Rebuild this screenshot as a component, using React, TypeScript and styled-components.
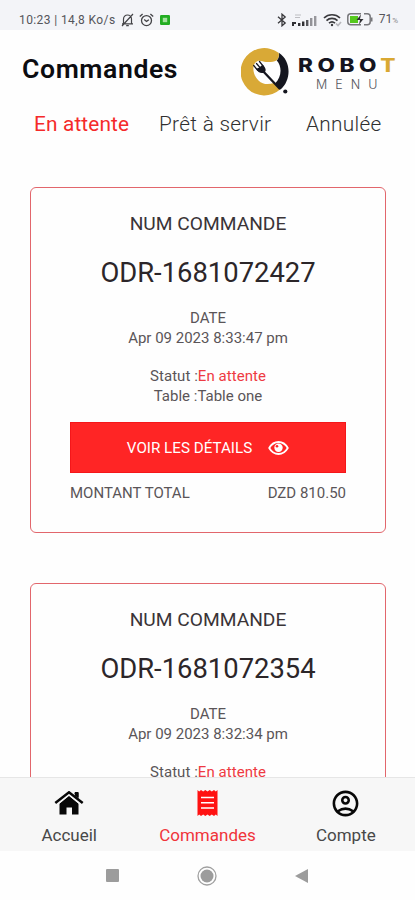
import React from "react";
import styled, { createGlobalStyle } from "styled-components";
import { MdOutlineAccountCircle } from "react-icons/md";

const GlobalStyle = createGlobalStyle`
  * { box-sizing: border-box; }
  body { margin: 0; background: #fefefe; font-family: Roboto, "Liberation Sans", sans-serif; color: #222; }
  svg { display: block; flex: none; }
`;

const Screen = styled.div`
  width: 415px;
  height: 900px;
  display: flex;
  flex-direction: column;
  overflow: hidden;
  background: #fefefe;
`;

const StatusBar = styled.header`
  height: 30px;
  flex: none;
  display: flex;
  align-items: center;
  justify-content: space-between;
  padding: 9px 17px 0 19px;
  background: #f3f4f8;
  color: #55555a;
  font-size: 12px;
  line-height: 20px;
`;

const StatusGroup = styled.div<{ $gap: number }>`
  display: flex;
  align-items: center;
  gap: ${(p) => p.$gap}px;
`;

const StatusText = styled.span<{ $spacing?: number }>`
  letter-spacing: ${(p) => p.$spacing ?? 0}px;
  white-space: nowrap;
  small { font-size: 8px; color: #88888c; }
`;

const TitleBar = styled.div`
  height: 76px;
  flex: none;
  display: flex;
  justify-content: space-between;
  padding: 17px 18px 0 22px;
`;

const Title = styled.h1`
  margin: 5px 0 0;
  font-size: 26.6px;
  line-height: 34px;
  font-weight: 600;
  letter-spacing: 0.6px;
  color: #0c0c10;
`;

const Logo = styled.div`
  display: flex;
  width: 156px;
  gap: 7px;
`;

const LogoWords = styled.div`
  display: flex;
  flex-direction: column;
  padding-top: 8px;
  font-family: Inter, "Open Sans", sans-serif;
`;

const LogoName = styled.span`
  font-size: 18.5px;
  line-height: 20px;
  font-weight: 800;
  letter-spacing: 3.7px;
  transform: scaleX(1.22);
  transform-origin: left;
  color: #14141f;
  b { color: #d9a832; font-weight: 800; }
`;

const LogoSub = styled.span`
  padding-left: 18px;
  font-size: 12.5px;
  line-height: 20px;
  font-weight: 300;
  letter-spacing: 8px;
  color: #55555b;
`;

const Tabs = styled.nav`
  flex: none;
  height: 81px;
  display: grid;
  grid-template-columns: 125px 147px auto;
  padding: 5px 0 0 34px;
`;

const Tab = styled.span<{ $active?: boolean }>`
  font-size: 20.8px;
  line-height: 26px;
  font-weight: ${(p) => (p.$active ? 400 : 300)};
  letter-spacing: ${(p) => (p.$active ? 0.15 : 0.3)}px;
  color: ${(p) => (p.$active ? "#f52a2a" : "#303030")};
  white-space: nowrap;
`;

const Orders = styled.main`
  flex: 1;
  min-height: 0;
  overflow: hidden;
  display: flex;
  flex-direction: column;
  gap: 50px;
  padding: 0 29px 0 30px;
`;

const Card = styled.article`
  flex: none;
  height: 346px;
  display: flex;
  flex-direction: column;
  align-items: center;
  padding: 21.4px 39px 0;
  border: 1px solid #e2666c;
  border-radius: 6px;
`;

const CardHeading = styled.div`
  font-size: 19.2px;
  line-height: 30px;
  color: #3a3437;
`;

const OrderNumber = styled.div`
  margin: 14px 0 15px;
  font-size: 27.4px;
  line-height: 40px;
  color: #2c2629;
`;

const Line = styled.div<{ $spacing?: number }>`
  font-size: 15px;
  line-height: 20px;
  letter-spacing: ${(p) => p.$spacing ?? 0}px;
  color: #5a5558;
  white-space: nowrap;
`;

const Details = styled.div`
  margin-top: 18px;
  display: flex;
  flex-direction: column;
  align-items: center;
`;

const Pending = styled.span`
  color: #ee3a42;
`;

const DetailsButton = styled.button`
  align-self: stretch;
  flex: none;
  height: 51px;
  margin: 15.6px 0 10px;
  padding: 2px 0 0;
  border: 1px solid #f5161a;
  background: #ff2525;
  color: #fff;
  display: flex;
  align-items: center;
  justify-content: center;
  gap: 16px;
  font: 400 15.2px/20px Roboto, sans-serif;
`;

const TotalRow = styled.div`
  align-self: stretch;
  display: flex;
  justify-content: space-between;
`;

const BottomNav = styled.nav`
  flex: none;
  height: 74px;
  display: grid;
  grid-template-columns: repeat(3, 1fr);
  background: #f7f7f7;
  border-top: 1px solid #e6e6e6;
`;

const NavItem = styled.div<{ $active?: boolean }>`
  display: flex;
  flex-direction: column;
  align-items: center;
  padding-top: 9px;
  color: ${(p) => (p.$active ? "#ff1a1a" : "#080808")};
`;

const NavIcon = styled.div`
  height: 32px;
  display: flex;
  align-items: center;
`;

const NavLabel = styled.span<{ $active?: boolean }>`
  margin-top: 5px;
  font-size: 17px;
  line-height: 22px;
  color: ${(p) => (p.$active ? "#f0343a" : "#484848")};
`;

const SystemBar = styled.footer`
  flex: none;
  height: 49px;
  display: flex;
  align-items: center;
  justify-content: space-between;
  padding: 0 107px 0 106px;
`;

const MutedBell = () => (
  <svg width="13" height="14" viewBox="0 0 13 14" fill="none" stroke="#444448" strokeWidth="1.2">
    <path d="M2.5 10.5V6a4 4 0 0 1 8 0v4.5M1 10.8h11M5.2 12.7h2.6M12 1 1 13" />
  </svg>
);

const AlarmClock = () => (
  <svg width="15" height="14" viewBox="0 0 15 14" fill="none" stroke="#444448" strokeWidth="1.3">
    <circle cx="7.5" cy="7.6" r="5" />
    <path d="M.8 3.6 3.6 1M14.2 3.6 11.4 1M5.2 6.4l2.3 2 2.4-1.6" />
  </svg>
);

const GreenApp = () => (
  <svg width="13" height="10" viewBox="-1 0 13 10">
    <rect width="10" height="10" rx="1.2" fill="#22ad22" />
    <rect x="2.8" y="2.8" width="4.4" height="4.4" fill="#a5e2a0" />
  </svg>
);

const Bluetooth = () => (
  <svg width="10" height="14" viewBox="0 0 10 14" fill="none" stroke="#38383c" strokeWidth="1.3">
    <path d="m1 3.7 7.2 6.2L5 12.8V1.2l3.2 2.9L1 10.3" />
  </svg>
);

const Signal = () => (
  <svg width="25" height="14" viewBox="0 0 25 14">
    <path d="M3 2h6M3 4.5h5" stroke="#bdbdc2" strokeWidth="1.2" />
    <path d="M0 9h4v2H2v2H0zM6 10h2.4v3H6zM10 8.5h2.4V13H10z" fill="#303034" />
    <path d="M14 7h2.4v6H14z" fill="#55555a" />
    <path d="M18 5h2.4v8H18z" fill="#929297" />
    <path d="M22 3h2.4v10H22z" fill="#97979c" />
  </svg>
);

const Wifi = () => (
  <svg width="19" height="14" viewBox="0 0 19 14" fill="none" stroke="#3a3a3e" strokeWidth="1.7">
    <path d="M1 5a11.5 11.5 0 0 1 16 0M3.5 7.6a8 8 0 0 1 11 0M6 10.1a4.6 4.6 0 0 1 6 0" />
    <circle cx="9" cy="12" r="1.2" fill="#3a3a3e" stroke="none" />
    <path d="m13 10.5 2 2 3-3.5" stroke="#b7b7bc" />
  </svg>
);

const Battery = () => (
  <svg width="26" height="13" viewBox="0 0 26 13" fill="none">
    <rect x=".8" y=".8" width="22.4" height="11" rx="3" stroke="#77777b" strokeWidth="1.5" />
    <path d="M24 4.5h1.5v4H24z" fill="#77777b" />
    <path d="M3 3h8v7H3z" fill="#55c91e" />
    <path d="M14 0h3v13h-3z" fill="#f3f4f8" />
    <path d="M14 1.5 9.5 7H13l-1 4.5L16.5 6H13z" fill="#2f2f33" />
  </svg>
);

const LogoMark = () => (
  <svg width="50" height="50" viewBox="0 0 50 50">
    <path
      d="M37.5 5.8A23.7 23.7 0 1 0 39 42.5L33 36C28 37.5 22 38 17.5 33.5 12.5 29 10.5 20 14.5 15.5 17.5 12 21 14.5 25 15 29 15.3 32.5 15 35.5 13.5 37.8 11.5 38.5 8 37.5 5.8z"
      fill="#d9a936"
    />
    <path d="M37.8 5.8C50.5 14 50.5 33 39.5 42.5L34 36.5C40.5 30.5 41.5 20 35.8 13.5 38 11 38.5 8.5 37.8 5.8z" fill="#15161f" />
    <path d="M20 22 38.5 41.5" stroke="#15161f" strokeWidth="2.3" strokeLinecap="round" />
    <path
      d="m12.7 18.5 4 4.8M15.5 16.5l4 4.6M18.5 14.5l3.8 4.8"
      stroke="#15161f"
      strokeWidth="1.3"
      strokeLinecap="round"
    />
    <path d="M15.2 21.5c2 0 4.7-2 6.3-4 2.8 2.6 4 5.4 2.6 7.2-2 2.4-7.6 1.6-8.9-3.2z" fill="#15161f" />
    <circle cx="44.3" cy="44.5" r="2.1" fill="#15161f" />
  </svg>
);

const Eye = () => (
  <svg width="21" height="16" viewBox="0 0 21 16">
    <path d="M1.2 8C3.5 4 6.800 2 10.500 2s7 2 9.300 6c-2.300 4-5.600 6-9.300 6s-7-2-9.300-6z" fill="none" stroke="#fff" strokeWidth="1.8" strokeLinejoin="round" />
    <circle cx="10.5" cy="7.8" r="4.2" fill="#fff" />
    <circle cx="9" cy="6.3" r="1.3" fill="#ff2525" />
  </svg>
);

const House = () => (
  <svg width="30" height="24" viewBox="0 0 30 24">
    <path d="M20.5 2H24.5V11L20.5 7z" fill="currentColor" />
    <path d="M5.5 12.500 15 4.800l9.500 7.700V23.500H18V16.500H12.500V23.500H5.500z" fill="currentColor" />
    <path d="M1.500 12.500 15 1.600 28.500 12.500" fill="none" stroke="#f7f7f7" strokeWidth="5" />
    <path d="M1.300 12 15 1.300 28.700 12" fill="none" stroke="currentColor" strokeWidth="2.500" />
    <path d="M20.800 1H24.500V7.500L20.800 4.500z" fill="currentColor" />
  </svg>
);

const Receipt = () => (
  <svg width="21" height="26" viewBox="0 0 21 26">
    <path
      d="M.5 0 2.2 1.6 4 0l2.2 1.6L8.3 0l2.2 1.6L12.7 0l2.1 1.6L17 0l1.8 1.6L20.5 0v26l-1.7-1.6L17 26l-2.2-1.6-2.1 1.6-2.2-1.6L8.3 26l-2.1-1.6L4 26l-1.8-1.6L.5 26z"
      fill="#ff1212"
    />
    <path d="M4 7.5h13M4 12.8h13M4 18h13" stroke="#fff" strokeWidth="1.5" />
  </svg>
);

const orders = [
  { id: "ODR-1681072427", date: "Apr 09 2023 8:33:47 pm", table: "Table one", total: "DZD 810.50" },
  { id: "ODR-1681072354", date: "Apr 09 2023 8:32:34 pm", table: "Table one", total: "DZD 810.50" },
];

export default function App() {
  return (
    <>
      <GlobalStyle />
      <Screen>
        <StatusBar>
          <StatusGroup $gap={5}>
            <StatusText $spacing={0.4}>10:23 | 14,8 Ko/s</StatusText>
            <MutedBell />
            <AlarmClock />
            <GreenApp />
          </StatusGroup>
          <StatusGroup $gap={5.5}>
            <Bluetooth />
            <Signal />
            <Wifi />
            <Battery />
            <StatusText>71<small>%</small></StatusText>
          </StatusGroup>
        </StatusBar>
        <TitleBar>
          <Title>Commandes</Title>
          <Logo>
            <LogoMark />
            <LogoWords>
              <LogoName>ROBO<b>T</b></LogoName>
              <LogoSub>MENU</LogoSub>
            </LogoWords>
          </Logo>
        </TitleBar>
        <Tabs>
          <Tab $active>En attente</Tab>
          <Tab>Prêt à servir</Tab>
          <Tab>Annulée</Tab>
        </Tabs>
        <Orders>
          {orders.map((o) => (
            <Card key={o.id}>
              <CardHeading>NUM COMMANDE</CardHeading>
              <OrderNumber>{o.id}</OrderNumber>
              <Line>DATE</Line>
              <Line>{o.date}</Line>
              <Details>
                <Line $spacing={0.05}>Statut :<Pending>En attente</Pending></Line>
                <Line>Table :{o.table}</Line>
              </Details>
              <DetailsButton>
                VOIR LES DÉTAILS
                <Eye />
              </DetailsButton>
              <TotalRow>
                <Line>MONTANT TOTAL</Line>
                <Line>{o.total}</Line>
              </TotalRow>
            </Card>
          ))}
        </Orders>
        <BottomNav>
          <NavItem>
            <NavIcon><House /></NavIcon>
            <NavLabel>Accueil</NavLabel>
          </NavItem>
          <NavItem $active>
            <NavIcon><Receipt /></NavIcon>
            <NavLabel $active>Commandes</NavLabel>
          </NavItem>
          <NavItem>
            <NavIcon><MdOutlineAccountCircle size={31} /></NavIcon>
            <NavLabel>Compte</NavLabel>
          </NavItem>
        </BottomNav>
        <SystemBar>
          <svg width="13" height="13"><rect width="13" height="13" rx="1" fill="#9c9c9c" /></svg>
          <svg width="20" height="20" viewBox="0 0 20 20">
            <circle cx="10" cy="10" r="9" fill="none" stroke="#a0a0a0" strokeWidth="1.3" />
            <circle cx="10" cy="10" r="6.5" fill="#9c9c9c" />
          </svg>
          <svg width="13" height="14"><path d="M13 0v14L0 7z" fill="#9c9c9c" /></svg>
        </SystemBar>
      </Screen>
    </>
  );
}
